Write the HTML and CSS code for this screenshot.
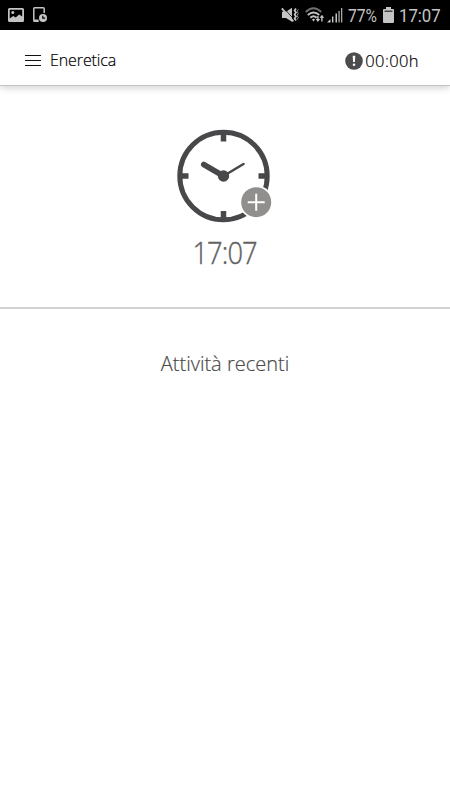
FILE: index.html
```html
<!DOCTYPE html>
<html lang="it">
<head>
  <meta charset="UTF-8" />
  <meta name="viewport" content="width=device-width, initial-scale=1.0" />
  <title>Eneretica</title>
  <link rel="stylesheet" href="styles.css">
</head>
<body>
  <div class="status-bar">
    <div class="status-left">
      <svg class="icon-picture" width="16" height="14" viewBox="0 0 16 14">
        <path fill="#c4c4c4" fill-rule="evenodd" d="M1.500 0h13Q16 0 16 1.500v11Q16 14 14.500 14h-13Q0 14 0 12.500v-11Q0 0 1.500 0zM1.700 1.700v8.800l3.500-2.500 2.500 1.500 3.500-3 3 2V1.700z" />
        <circle cx="4.800" cy="4.600" r="1.500" fill="#c4c4c4" />
      </svg>
      <svg class="icon-device" width="15" height="16" viewBox="0 0 15 16">
        <path fill="none" stroke="#c4c4c4" stroke-width="1.500" d="M5.500 14.200H1.700Q.8 14.200.8 13.200V1.800Q.8.800 1.700.8h8.600q.9 0 .9 1V6" />
        <path fill="#c4c4c4" d="M1 12.500h4.500V15H2z" />
        <circle cx="10" cy="11" r="4" fill="#c4c4c4" />
        <path fill="none" stroke="#000" stroke-width="1.200" d="M9.800 8.800v2.400h2.400" />
      </svg>
    </div>

    <div class="status-right">
      <svg class="icon-mute" width="18" height="16" viewBox="0 0 18 16">
        <path fill="#c4c4c4" d="M1 4.800h4L11 .8v14L5 11H1z" />
        <path stroke="#000" stroke-width=".8" d="M3.200 1.500l9.500 10.500" />
        <path stroke="#c4c4c4" stroke-width="1.800" d="M.8 1.300l11.500 13" />
        <path fill="none" stroke="#c4c4c4" stroke-width="1.700" d="M15 1.500l-1.400 2L15 5.500l-1.400 2L15 9.500l-1.400 2 1.400 2" />
        <path fill="none" stroke="#999" stroke-width="1" d="M17.200 2.500l-1 2 1 2-1 2 1 2-1 2" />
      </svg>
      <svg class="icon-wifi" width="20" height="16" viewBox="0 0 20 16">
        <g fill="none" stroke-width="1.900">
          <path stroke="#707070" d="M.8 5q7.700-7.500 15.400 0" />
          <path stroke="#c4c4c4" d="M2.800 8q5.700-5.200 11.400 0M5.300 10.700q3.200-2.800 6.400 0" />
        </g>
        <path fill="#c4c4c4" d="M7 12.500q1.500-1.300 3 0l-1.500 2z" />
        <path fill="#c4c4c4" d="M12.200 9h1.400v3h1.600l-2.300 3-2.300-3h1.600zM16.200 14.500h1.400v-3.700h1.600l-2.300-3-2.300 3h1.600z" />
      </svg>
      <svg class="icon-signal" width="16" height="16" viewBox="0 0 16 16">
        <path fill="#c4c4c4" d="M0 15.500L3.500 12v3.500zM5 9.500h1.400v6H5zM8.500 6.500h1.500v9H8.500z" />
        <path fill="#a8a8a8" d="M11.400 4h1.300v11.500h-1.300zM14 1h1.300v14.500H14z" />
      </svg>
      <span class="battery-level">77%</span>
      <svg class="icon-battery" width="11" height="16" viewBox="0 0 11 16">
        <path fill="#c4c4c4" d="M3 0h5v2h2q1 0 1 1v12q0 1-1 1H1q-1 0-1-1V3q0-1 1-1h2z" />
        <path fill="#444" d="M1.500 3.500h8V5h-8z" />
      </svg>
      <span class="status-time">17:07</span>
    </div>
  </div>

  <header>
    <button class="menu-button" aria-label="Menu"><span></span><span></span><span></span></button>
    <h1 class="page-title">Eneretica</h1>
    <div class="hours">
      <svg width="18" height="18" viewBox="0 0 18 18">
        <circle cx="9" cy="9" r="8.800" fill="#4c4c4e" />
        <path fill="#fff" d="M7.700 3.800h2.600L9.900 10H8.100z" />
        <circle cx="9" cy="12.800" r="1.300" fill="#fff" />
      </svg>
      <span>00:00h</span>
    </div>
  </header>

  <section class="clock-panel">
    <svg class="clock" width="96" height="94" viewBox="0 0 96 94">
      <circle cx="47.500" cy="47" r="43.700" fill="none" stroke="#48484a" stroke-width="5" />
      <path stroke="#48484a" stroke-width="5.500" d="M47.500 5v7.500M47.500 82v7.500M5 47h7.500M82.500 47H90" />
      <path stroke="#48484a" stroke-width="5.500" stroke-linecap="round" d="M27.700 35.500L47.500 47" />
      <path stroke="#48484a" stroke-width="2.600" stroke-linecap="round" d="M47.500 47l20-12" />
      <circle cx="47.500" cy="47" r="5.700" fill="#48484a" />
      <circle cx="80.200" cy="73.200" r="16.800" fill="#fff" />
      <circle cx="80.200" cy="73.200" r="15" fill="#918f8d" />
      <path stroke="#fff" stroke-width="2" d="M71.700 73.200h17M80.200 64.700v17" />
    </svg>
    <p class="clock-time">17:07</p>
  </section>

  <main>
    <h2 class="recent-title">Attività recenti</h2>
  </main>
</body>
</html>
```
FILE: styles.css
```css
* {
  margin: 0;
  padding: 0;
  box-sizing: border-box;
}

body {
  background-color: #fff;
  color: #000;
  font-family: "Open Sans", "Noto Sans", sans-serif;
  font-weight: 300;
}

.status-bar {
  display: flex;
  justify-content: space-between;
  align-items: center;
  height: 30px;
  padding: 0 10px 0 8px;
  background: #000;
  color: #c4c4c4;
  font-family: Roboto, sans-serif;
  font-weight: 400;
  font-size: 19px;
}

.status-left,
.status-right {
  display: flex;
  align-items: center;
}

.icon-device {
  margin-left: 9px;
}

.icon-wifi {
  margin-left: 6px;
}

.icon-signal {
  margin-left: 2px;
}

.battery-level {
  width: 31px;
  margin-left: 5px;
  transform: scaleX(0.82);
  transform-origin: left;
}

.icon-battery {
  margin-left: 4px;
}

.status-time {
  width: 41px;
  margin-left: 5px;
  transform: scaleX(0.88);
  transform-origin: left;
}

header {
  display: flex;
  align-items: center;
  height: 56px;
  padding: 5px 31px 0 25px;
  border-bottom: 1px solid #c4c4c4;
  box-shadow: 0 2px 7px rgba(0, 0, 0, 0.18);
}

.menu-button {
  display: flex;
  flex-direction: column;
  gap: 4px;
  width: 16px;
  border: none;
  background: none;
}

.menu-button span {
  height: 1px;
  background: #111;
}

.page-title {
  margin-left: 9px;
  font-size: 16px;
  font-weight: 300;
  letter-spacing: -0.1px;
  -webkit-text-stroke: 0.2px;
}

.hours {
  display: flex;
  align-items: center;
  gap: 2px;
  margin-left: auto;
  font-size: 16.5px;
  letter-spacing: 0.4px;
  -webkit-text-stroke: 0.2px;
}

.hours svg {
  margin-top: 2px;
}

.clock-panel {
  display: flex;
  flex-direction: column;
  align-items: center;
  height: 223px;
  padding-top: 43px;
  border-bottom: 2px solid #d2d2d2;
}

.clock {
  margin-right: 2px;
}

.clock-time {
  margin-top: 8px;
  color: #626262;
  font-size: 31px;
  line-height: 42px;
  letter-spacing: -1px;
  transform: scaleX(0.88);
  -webkit-text-stroke: 0.4px;
}

.recent-title {
  margin-top: 41px;
  color: #4a4a4a;
  font-size: 20px;
  font-weight: 300;
  line-height: 28px;
  text-align: center;
  -webkit-text-stroke: 0.2px;
}
```
